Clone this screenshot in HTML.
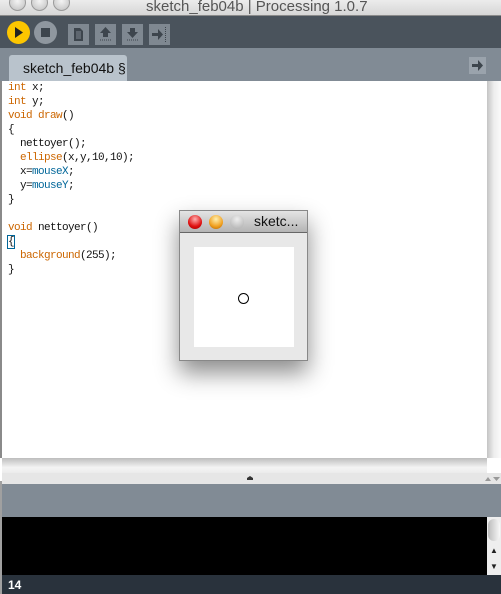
<!DOCTYPE html>
<html><head><meta charset="utf-8"><style>
*{margin:0;padding:0;box-sizing:border-box}
body{width:501px;height:594px;overflow:hidden;background:#fff;position:relative;font-family:"Liberation Sans",sans-serif}
.abs{position:absolute}
.title{left:0;top:0;width:501px;height:16px;background:linear-gradient(#ececec,#d6d6d6);border-bottom:1px solid #8a8a8a;overflow:hidden}
.title .t{position:absolute;left:146px;top:-2px;font-size:15px;color:#555;white-space:nowrap}
.light{position:absolute;top:-6px;width:17px;height:17px;border-radius:50%;background:radial-gradient(circle at 50% 40%,#f4f4f4,#bdbdbd);border:1px solid #9a9a9a}
.tool{left:0;top:16px;width:501px;height:32px;background:#4a535c}
.btn{position:absolute;top:8px;width:21px;height:21px;background:#7f8891}
.tabs{left:0;top:48px;width:501px;height:33px;background:#818b95}
.tab{left:9px;top:55px;width:118px;height:26px;background:#b9c3cc;border-radius:3px 3px 0 0;font-size:14px;color:#111;padding:5px 0 0 14px}
.code{left:8px;top:81px;font-family:"Liberation Mono",monospace;font-size:11px;letter-spacing:-0.6px;line-height:14px;color:#111;white-space:pre}
.k{color:#cc6600}.b{color:#006699}
</style></head><body>
<div class="abs title">
<div class="light" style="left:9px"></div><div class="light" style="left:31px"></div><div class="light" style="left:53px"></div>
<div class="t">sketch_feb04b | Processing 1.0.7</div></div>
<div class="abs tool">
<div style="position:absolute;left:7px;top:5px;width:23px;height:23px;border-radius:50%;background:#fdc600"></div>
<svg style="position:absolute;left:14px;top:11px" width="10" height="11"><path d="M1 0L9 5.5L1 11Z" fill="#222"/></svg>
<div style="position:absolute;left:34px;top:5px;width:23px;height:23px;border-radius:50%;background:#8f979f"></div>
<div style="position:absolute;left:41px;top:12px;width:9px;height:9px;background:#3d454d"></div>
<div class="btn" style="left:68px"><svg width="21" height="21"><path d="M6 4h6l3 3v10H6z" fill="#3d454d"/><path d="M8 8h5M8 10h5M8 12h5M8 14h5" stroke="#7f8891"/></svg></div>
<div class="btn" style="left:95px"><svg width="21" height="21"><path d="M10.5 3L16 9h-3v4H8V9H5z" fill="#3d454d"/><path d="M5 16h11" stroke="#3d454d" stroke-dasharray="1 1"/></svg></div>
<div class="btn" style="left:122px"><svg width="21" height="21"><path d="M10.5 14L16 8h-3V4H8v4H5z" fill="#3d454d"/><path d="M5 16h11" stroke="#3d454d" stroke-dasharray="1 1"/></svg></div>
<div class="btn" style="left:149px"><svg width="21" height="21"><path d="M3 9h6V5l5 5.5-5 5.5v-4H3z" fill="#3d454d"/><path d="M16.5 3v15" stroke="#3d454d" stroke-dasharray="1 1"/></svg></div>
</div>
<div class="abs tabs"><div style="position:absolute;left:469px;top:9px;width:17px;height:17px;background:#9aa3ac"><svg width="17" height="17"><path d="M3 7h6V3l5 5.5-5 5.5V10H3z" fill="#3d454d"/></svg></div></div>
<div class="abs tab">sketch_feb04b §</div>
<div class="abs" style="left:0;top:81px;width:2px;height:377px;background:#8a8a8a"></div>
<div class="abs code"><span class="k">int</span> x;
<span class="k">int</span> y;
<span class="k">void</span> <span class="k">draw</span>()
{
  nettoyer();
  <span class="k">ellipse</span>(x,y,10,10);
  x=<span class="b">mouseX</span>;
  y=<span class="b">mouseY</span>;
}

<span class="k">void</span> nettoyer()
<span style="outline:1px solid #006699">{</span>
  <span class="k">background</span>(255);
}</div>
<div class="abs" style="left:487px;top:81px;width:14px;height:377px;background:linear-gradient(90deg,#c4c4c4,#eee 50%,#fafafa)"></div>
<div class="abs" style="left:2px;top:458px;width:485px;height:16px;background:linear-gradient(#bdbdbd,#f4f4f4 60%,#eaeaea)"></div>
<div class="abs" style="left:2px;top:473px;width:499px;height:11px;background:#e6e6e6"></div>
<svg class="abs" style="left:246px;top:475px" width="8" height="6"><path d="M1 5V3L4 1 7 3v2z" fill="#333"/></svg>
<svg class="abs" style="left:484px;top:476px" width="17" height="6"><path d="M1 5L4 1 7 5zM9 1h7l-3.5 4z" fill="#999"/></svg>
<div class="abs" style="left:2px;top:484px;width:499px;height:33px;background:#818b95"></div>
<div class="abs" style="left:2px;top:517px;width:499px;height:58px;background:#000"></div>
<div class="abs" style="left:487px;top:517px;width:14px;height:58px;background:#eee"><div style="margin:2px 1px;width:12px;height:22px;border-radius:6px;background:linear-gradient(90deg,#bbb,#f8f8f8)"></div><div style="font-size:8px;color:#222;text-align:center;line-height:16px">▲<br>▼</div></div>
<div class="abs" style="left:0;top:575px;width:501px;height:19px;background:#29323c;color:#fff;font-size:12px;font-weight:bold;padding:3px 0 0 8px">14</div>
<div class="abs" style="left:0;top:481px;width:2px;height:113px;background:#a0a0a0"></div>
<div class="abs" style="left:179px;top:210px;width:129px;height:151px;box-shadow:0 12px 22px rgba(0,0,0,.45);background:#e8e8e8;border:1px solid #888">
<div style="height:22px;background:linear-gradient(#e4e4e4,#b4b4b4);border-bottom:1px solid #666;position:relative">
<div style="position:absolute;left:8px;top:4px;width:14px;height:14px;border-radius:50%;background:radial-gradient(circle at 50% 30%,#ffb0b0,#e01010 60%,#900)"></div>
<div style="position:absolute;left:29px;top:4px;width:14px;height:14px;border-radius:50%;background:radial-gradient(circle at 50% 30%,#fff0b0,#f0a020 60%,#b06000)"></div>
<div style="position:absolute;left:50px;top:4px;width:14px;height:14px;border-radius:50%;background:radial-gradient(circle at 50% 30%,#eee,#aaa)"></div>
<div style="position:absolute;left:74px;top:2px;font-size:14px;color:#111">sketc...</div></div>
<div style="position:absolute;left:14px;top:36px;width:100px;height:100px;background:#fff"><div style="position:absolute;left:44px;top:46px;width:11px;height:11px;border:1px solid #000;border-radius:50%"></div></div>
</div>
</body></html>
